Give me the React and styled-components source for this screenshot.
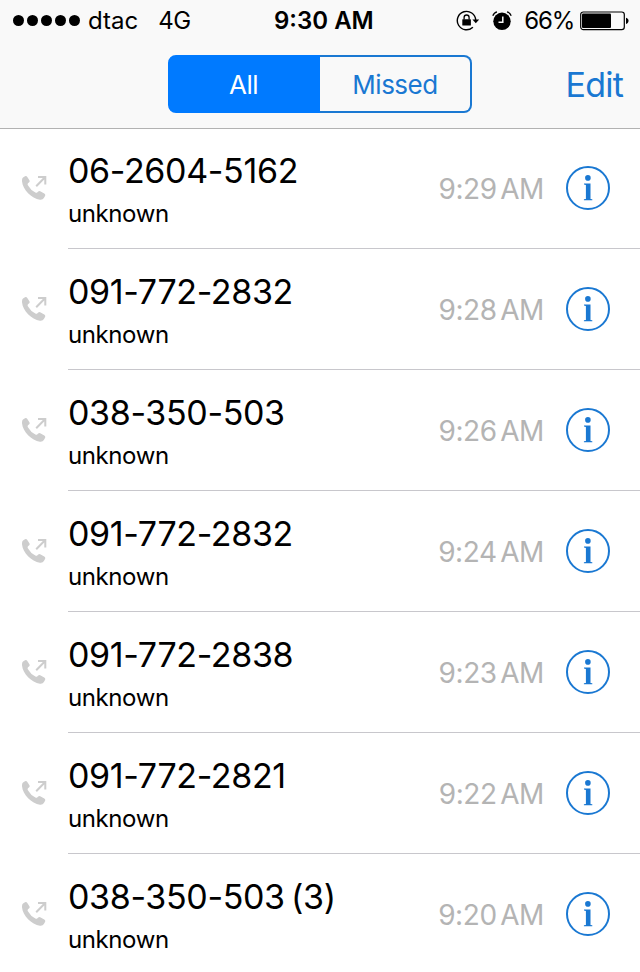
import React from 'react'
import styled, { createGlobalStyle } from 'styled-components';

const calls = [
	{ number: '06-2604-5162', time: '9:29 AM' },
	{ number: '091-772-2832', time: '9:28 AM' },
	{ number: '038-350-503', time: '9:26 AM' },
	{ number: '091-772-2832', time: '9:24 AM' },
	{ number: '091-772-2838', time: '9:23 AM' },
	{ number: '091-772-2821', time: '9:22 AM' },
	{ number: '038-350-503 (3)', time: '9:20 AM' },
]

function StatusBar() {
	return (
		<StatusContainer>
			<StatusLeft>
				<Signal>
					<Dot /><Dot /><Dot /><Dot /><Dot />
				</Signal>
				<Carrier>dtac</Carrier>
				<Network>4G</Network>
			</StatusLeft>
			<Clock>9:30 AM</Clock>
			<StatusRight>
				<LockIcon />
				<AlarmIcon />
				<Percent>66%</Percent>
				<BatteryIcon />
			</StatusRight>
		</StatusContainer>
	);
}

function LockIcon() {
	return (
		<svg width="24" height="22" viewBox="0 0 24 22">
			<path d="M16.900 17.200A9.200 9.200 0 1 1 19.700 10" fill="none" stroke="#000" strokeWidth="1.400" />
			<path d="M16.400 9.600h6.800l-3.400 3.600z" />
			<rect x="6.300" y="9.200" width="8.600" height="6.400" rx="0.600" />
			<path d="M8.100 9.500V7.500a2.500 2.500 0 0 1 5 0v2" fill="none" stroke="#000" strokeWidth="1.300" />
		</svg>
	);
}

function AlarmIcon() {
	return (
		<svg width="20" height="20" viewBox="0 0 20 20">
			<circle cx="10" cy="10.300" r="8.700" />
			<path d="M.8 4.800Q2 1.600 5 .9M19.200 4.800Q18 1.600 15 .9" fill="none" stroke="#000" strokeWidth="1.300" />
			<path d="M10.800 5.500v5.800H6.500" fill="none" stroke="#f9f9f9" strokeWidth="1.500" />
		</svg>
	);
}

function BatteryIcon() {
	return (
		<svg width="49" height="20" viewBox="0 0 49 20">
			<rect x="0.700" y="1" width="43.600" height="17.600" rx="2.600" fill="none" stroke="#000" strokeWidth="1.200" />
			<rect x="2" y="2.500" width="29" height="14.600" rx="1" />
			<path d="M46 6.700c3.400.6 3.400 5.600 0 6.200z" />
		</svg>
	);
}

function OutgoingIcon() {
	return (
		<svg width="26" height="26" viewBox="0 0 26 26">
			<path
				d="M1 2.600L3 1.300Q4.400.6 5.300 1.900L7.400 5.200Q8.100 6.600 6.900 7.500L6 8.300Q5.300 9 5.900 10.200Q8.600 15 13.400 17.600Q14.600 18.100 15.200 17.500L16.200 16.600Q17.300 15.700 18.700 16.400L22.300 18.600Q23.800 19.600 23 21.100L21.900 23.100Q20.700 25 18 24.700C9.500 23.500.7 14.600 0 6.200Q-.1 3.500 1 2.600Z"
				fill="#cdcdcd"
			/>
			<path d="M14.200 11.200L23 2.300M16 2.100h7.300v7.500" fill="none" stroke="#cdcdcd" strokeWidth="2" />
		</svg>
	);
}

function InfoIcon() {
	return (
		<svg width="44" height="44" viewBox="0 0 44 44" fill="#1a78d2">
			<circle cx="22" cy="22" r="21" fill="none" stroke="#1a78d2" strokeWidth="2" />
			<circle cx="21.900" cy="11.900" r="2.800" />
			<path d="M18 17.600h6.500v15.300l1.800.4v1H17.900v-1l2-.4V19l-1.900-.4z" />
		</svg>
	);
}

function CallRow({ call }) {
	return (
		<Row>
			<TypeBox>
				<OutgoingIcon />
			</TypeBox>
			<RowBody>
				<CallDetails>
					<PhoneNumber>{call.number}</PhoneNumber>
					<CallLabel>unknown</CallLabel>
				</CallDetails>
				<CallTime>{call.time}</CallTime>
				<InfoButton aria-label="Info">
					<InfoIcon />
				</InfoButton>
			</RowBody>
		</Row>
	);
}

function App() {
	return (
		<Screen>
			<GlobalStyle />
			<Header>
				<StatusBar />
				<NavBar>
					<Segments>
						<Segment $active>All</Segment>
						<Segment>Missed</Segment>
					</Segments>
					<EditButton>Edit</EditButton>
				</NavBar>
			</Header>
			{calls.map((call, index) => (
				<CallRow key={index} call={call} />
			))}
		</Screen>
	);
}

const GlobalStyle = createGlobalStyle`
	* {
		box-sizing: border-box;
	}
	body {
		margin: 0;
		background: #fff;
	}
	button {
		font: inherit;
		padding: 0;
		border: 0;
		background: none;
	}
	svg {
		display: block;
		flex-shrink: 0;
	}
`
const Screen = styled.div`
	width: 640px;
	height: 972px;
	overflow: hidden;
	background: #fff;
	color: #000;
	font-family: Inter, "Liberation Sans", sans-serif;
	white-space: nowrap;
`
const Header = styled.header`
	height: 128px;
	background: #f9f9f9;
	box-shadow: 0 1px 0 #b2b2b2;
`
const StatusContainer = styled.div`
	height: 40px;
	display: grid;
	grid-template-columns: 261px auto 1fr;
	align-items: center;
	padding: 1px 11px 0 13px;
	font-size: 24px;
	line-height: 39px;
`
const StatusLeft = styled.div`
	display: flex;
	align-items: center;
`
const Signal = styled.div`
	display: flex;
	gap: 3px;
`
const Dot = styled.span`
	width: 11px;
	height: 11px;
	border-radius: 50%;
	background: #000;
`
const Carrier = styled.span`
	margin-left: 8px;
`
const Network = styled.span`
	margin-left: 20px;
	letter-spacing: -0.5px;
`
const Clock = styled.div`
	font-weight: 580;
`
const StatusRight = styled.div`
	display: flex;
	justify-content: flex-end;
	align-items: center;
	gap: 12px;
`
const Percent = styled.span`
	margin-right: -6px;
	letter-spacing: -1.2px;
`
const NavBar = styled.div`
	height: 88px;
	padding: 15px 17px 0 168px;
	display: flex;
	justify-content: space-between;
	align-items: flex-start;
`
const Segments = styled.div`
	display: grid;
	grid-template-columns: 152px 152px;
	height: 58px;
`
const Segment = styled.button`
	font-size: 26px;
	letter-spacing: -0.5px;
	color: ${props => (props.$active ? '#fff' : '#1a78d2')};
	background: ${props => (props.$active ? '#007aff' : 'none')};
	border: 2px solid ${props => (props.$active ? '#007aff' : '#1a78d2')};
	border-radius: ${props => (props.$active ? '8px 0 0 8px' : '0 8px 8px 0')};
	&:last-child {
		border-left: 0;
	}
	&:first-child {
		padding-right: 1px;
	}
`
const EditButton = styled.button`
	height: 58px;
	font-size: 34px;
	letter-spacing: -0.8px;
	color: #1a78d2;
`
const Row = styled.div`
	height: 121px;
	display: flex;
`
const TypeBox = styled.div`
	width: 68px;
	padding: 47px 0 0 22px;
`
const RowBody = styled.div`
	flex: 1;
	display: flex;
	align-items: center;
	padding-right: 30px;
	border-bottom: 1px solid #c8c7cc;
`
const CallDetails = styled.div`
	flex: 1;
	height: 120px;
	padding-top: 23px;
`
const PhoneNumber = styled.div`
	font-size: 34px;
	line-height: 40px;
	letter-spacing: -0.35px;
	word-spacing: -3px;
`
const CallLabel = styled.div`
	margin-top: 8px;
	font-size: 24px;
	line-height: 30px;
	letter-spacing: -0.4px;
`
const CallTime = styled.div`
	margin-right: 22px;
	padding-top: 1px;
	font-size: 28px;
	letter-spacing: -0.4px;
	word-spacing: -4px;
	color: #b4b4b4;
`
const InfoButton = styled.button`
	width: 44px;
	height: 44px;
`

export default App;
